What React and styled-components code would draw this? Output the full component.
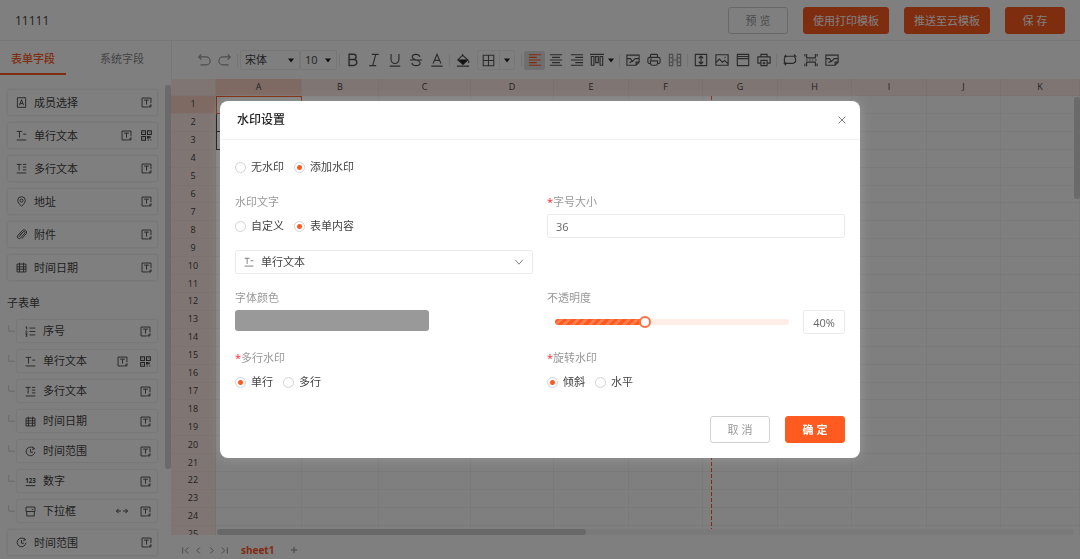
import React, { useState } from "react";
import styled, { createGlobalStyle, css } from "styled-components";

const icons = {
  undo: "M5 1.500 2 4.500l3 3M2 4.500h8.500a4.500 4.500 0 0 1 0 9H4",
  redo: "M11 1.500 14 4.500l-3 3M14 4.500H5.500a4.500 4.500 0 0 0 0 9H12",
  bold: "M3.500 1.500h5a3 3 0 0 1 0 6h-5zM3.500 7.500h5.500a3.300 3.300 0 0 1 0 6.700H3.500z",
  italic: "M5.500 1.500h8M2.500 14.500h8M10 1.500 6.500 14.500",
  underline: "M3.500 1v6.500a4.500 4.500 0 0 0 9 0V1M2 15h12",
  strike:
    "M12.500 4.500C12 2.500 10.500 1.500 8 1.500c-2.700 0-4.300 1.300-4.300 3C3.700 6.500 5.500 7.200 8 8c3 .8 4.600 1.600 4.600 3.500 0 1.700-1.700 3-4.600 3-2.700 0-4.400-1.200-4.700-3.200M1 8h14",
  color: "M3.500 12 8 1.500 12.500 12M5.200 8.500h5.600M1.500 15h13",
  borders: "M1.500 1.500h13v13h-13zM8 1.500v13M1.500 8h13",
  left: "M1 2h14M1 5h9M1 8h14M1 11h9M1 14h14",
  center: "M1 2h14M3.500 5h9M1 8h14M3.500 11h9M1 14h14",
  right: "M1 2h14M6 5h9M1 8h14M6 11h9M1 14h14",
  valign: "M0 1.500h16M1.500 4h3v10h-3zM6.500 4h3v7h-3zM11.500 4h3v10h-3z",
  picture: "M1 2.500h14v8l-3.500 3.500H1zM1 6.500h4l2.500 3 3-3H15M4 11l3-1.500M11.500 14v-3.500H15",
  printer:
    "M4 5V2.500a1 1 0 0 1 1-1h6a1 1 0 0 1 1 1V5M4 12H3.200A2 2 0 0 1 1 10V7a2 2 0 0 1 2-2h10a2 2 0 0 1 2 2v3a2 2 0 0 1-2.200 2H12M4 9h8v3a2 2 0 0 1-2 2H6a2 2 0 0 1-2-2zM3.500 7h2",
  merge: "M1.500 1.500h4v13h-4zM10.500 1.500h4v13h-4zM1.500 5.500h4M10.500 5.500h4M1.500 10.500h4M10.500 10.500h4M5.500 8h5",
  height: "M1.500 1.500h13v13h-13zM8 3.500v9M5.500 6 8 3.500 10.500 6M5.500 10 8 12.500 10.500 10",
  image: "M1 2h14v12H1zM1 11l4-4 3.500 3.500L11 8.500l4 4M11 5h1",
  header: "M1.500 1.500h13v13h-13zM1.500 4h13M1.500 6.500h13",
  printSet: "M4.500 4.500v-3h7v3M4 11.500H1v-7h14v7h-3M4.500 8.500h7v6h-7zM8 10v3M6.500 11.500h3",
  loop: "M3.500 2 1.500 4.500M12.500 1.500l2 2.200H5a3.800 3.800 0 0 0-3.500 4A3.800 3.800 0 0 0 3 11.500M3.500 14l-2-2.200H11a3.800 3.800 0 0 0 3.500-4A3.800 3.800 0 0 0 13 4.500",
  page: "M3 1v4.500h10V1M3 15v-4.500h10V15M1 1v3M15 1v3M1 15v-3M15 15v-3M2 8h2M6 8h1.500M9 8h1.500M12.500 8h2",
  member: "M2 1h12v14H2zM5 12l3-8 3 8M6 9.500h4",
  single: "M1 2h8M5 2v9M10.500 6H15M1 14.500h14",
  multi: "M1 2h7M4.500 2v9M10 2h5M10 6h5M10 10h5M1 14.500h14",
  place: "M8 15C4.500 11.500 2.500 9 2.500 6.500a5.500 5.500 0 0 1 11 0C13.500 9 11.500 11.500 8 15zM8 4.500a2.200 2.200 0 1 1 0 4.400 2.200 2.200 0 0 1 0-4.400z",
  clip: "M4 11.500 10.500 4a1.500 1.500 0 0 1 2.300 2L6.500 13.200a2.700 2.700 0 0 1-4-3.600L9 2.200a3.700 3.700 0 0 1 5.600 4.800L8.500 14M5.800 9 10 4.200",
  date: "M1.500 3h13v11.500h-13zM1.500 7h13M1.500 10.500h13M5 1v13.500M11 1v13.500",
  serial: "M6.500 3H15M6.500 8H15M6.500 13H15M1 2l1.500-1v4M1 7.500c2-1 3 0 0 3h2.500M1 12.500h2L2 14c2 0 1.500 1.500-1 1.500",
  clock: "M12 3a6.300 6.300 0 1 0 2.300 5.500M8 4.500V9h3.500M10.500 5.500l4-2M11.500 1l1 3",
  select: "M1.500 1.500h13V8h-13zM2.500 8v6.500h11V8M9.500 4l1.500 1.500L12.500 4",
  arrows: "M1 8h5.500M3.500 5 .500 8l3 3M9.500 8H15M12.500 5l3 3-3 3",
  field: "M14.500 9V1.500h-13v13H10M4.500 4.500h7M8 4.500V11M11 14.500l3.500-3.500v3.500z",
  qr: "M1 1h5.500v5.500H1zM9.500 1H15v5.500H9.500zM1 9.500h5.500V15H1zM3.500 3.500h.6M12 3.500h.6M3.500 12h.6M9.500 9.500h2v2h-2zM13.500 9v3M9.500 14.500h2M13.500 14.500H15",
  branch: "M3 0v11h11",
  first: "M3 2.500v11M13 2.500 7.500 8l5.500 5.500",
  prev: "M10.500 2.500 5 8l5.500 5.500",
  next: "M5.500 2.500 11 8l-5.500 5.500",
  last: "M13 2.500v11M3 2.500 8.500 8 3 13.500",
  plus: "M8 3v10M3 8h10",
  down: "M2 4.500 8 11.500l6-7",
  close: "M2.500 2.500l11 11M13.500 2.500l-11 11",
};

const Icon = ({ name, size = 11, weight = 1.3 }) => (
  <svg
    width={size}
    height={size}
    viewBox="0 0 16 16"
    fill="none"
    stroke="currentColor"
    strokeWidth={weight}
    aria-hidden="true"
  >
    <path d={icons[name]} />
  </svg>
);

const Caret = () => (
  <svg width="6" height="5" viewBox="0 0 6 5" aria-hidden="true">
    <path d="M0 0.500h6L3 4.500z" fill="#222" />
  </svg>
);

const NumberIcon = () => (
  <svg width="11" height="11" viewBox="0 0 16 16" aria-hidden="true">
    <text x="8" y="9.500" fontSize="9" fontWeight="700" textAnchor="middle" fill="currentColor">
      123
    </text>
    <path d="M1 14h14" stroke="currentColor" strokeWidth="1.400" />
  </svg>
);

const BucketIcon = () => (
  <svg width="14" height="14" viewBox="0 0 16 16" aria-hidden="true">
    <path d="M7.500 1v3M7.500 2.500 13.500 8 8 13 2 8z" fill="none" stroke="currentColor" strokeWidth="1.300" />
    <path d="M2.500 7.500h11L8 13z" fill="#222" />
    <path d="M14.500 8.500v3M1 15h14" stroke="currentColor" strokeWidth="1.300" />
  </svg>
);

const fields = [
  { icon: "member", name: "成员选择" },
  { icon: "single", name: "单行文本", qr: true },
  { icon: "multi", name: "多行文本" },
  { icon: "place", name: "地址" },
  { icon: "clip", name: "附件" },
  { icon: "date", name: "时间日期" },
];

const subFields = [
  { icon: "serial", name: "序号" },
  { icon: "single", name: "单行文本", qr: true },
  { icon: "multi", name: "多行文本" },
  { icon: "date", name: "时间日期" },
  { icon: "clock", name: "时间范围" },
  { icon: "number", name: "数字" },
  { icon: "select", name: "下拉框", arrows: true },
];

const columns = [
  ["A", 86],
  ["B", 77],
  ["C", 92],
  ["D", 83],
  ["E", 75],
  ["F", 74],
  ["G", 75],
  ["H", 74],
  ["I", 75],
  ["J", 74],
  ["K"],
];
const rows = Array.from({ length: 25 }, (_, i) => i + 1);

const Field = ({ icon, name, qr, arrows, sub }) => (
  <FieldCard $sub={sub}>
    <FieldName $sub={sub}>
      {icon === "number" ? <NumberIcon /> : <Icon name={icon} />}
      {name}
    </FieldName>
    {arrows && <Icon name="arrows" size={12} />}
    <Icon name="field" />
    {qr && <Icon name="qr" weight={1.6} />}
  </FieldCard>
);

const Choice = ({ group, options, picked }) => (
  <Choices role="radiogroup">
    {options.map((text, i) => (
      <ChoiceLabel key={text}>
        <Radio type="radio" name={group} defaultChecked={i === picked} />
        {text}
      </ChoiceLabel>
    ))}
  </Choices>
);

const Tool = ({ name, label, active, faded, weight }) => (
  <ToolButton type="button" aria-label={label || name} $active={active} $faded={faded}>
    <Icon name={name} size={14} weight={weight} />
  </ToolButton>
);

const Toolbar = () => (
  <Tools>
    <Tool name="undo" faded />
    <Tool name="redo" faded />
    <Divider />
    <Picker $width={60}>
      <select aria-label="字体" defaultValue="宋体">
        <option>宋体</option>
      </select>
      <Caret />
    </Picker>
    <Picker $width={37}>
      <select aria-label="字号" defaultValue="10">
        <option>10</option>
      </select>
      <Caret />
    </Picker>
    <Divider />
    <Tool name="bold" weight={1.6} />
    <Tool name="italic" />
    <Tool name="underline" />
    <Tool name="strike" />
    <Tool name="color" />
    <Divider />
    <ToolButton type="button" aria-label="fill">
      <BucketIcon />
    </ToolButton>
    <Split>
      <button type="button" aria-label="borders">
        <Icon name="borders" size={13} />
      </button>
      <button type="button" aria-label="border styles">
        <Caret />
      </button>
    </Split>
    <Divider />
    <Tool name="left" active />
    <Tool name="center" />
    <Tool name="right" />
    <ToolButton type="button" aria-label="vertical align" $wide>
      <Icon name="valign" size={14} />
      <Caret />
    </ToolButton>
    <Divider />
    <Tool name="picture" />
    <Tool name="printer" />
    <Tool name="merge" faded />
    <Divider />
    <Tool name="height" />
    <Tool name="image" />
    <Tool name="header" />
    <Tool name="printSet" />
    <Divider />
    <Tool name="loop" />
    <Tool name="page" />
    <Tool name="picture" label="watermark" />
  </Tools>
);

const Sheet = () => (
  <SheetArea>
    <Grid>
      <colgroup>
        <col width="45" />
        {columns.map(([letter, width]) => (
          <col key={letter} width={width} />
        ))}
      </colgroup>
      <thead>
        <tr>
          <Head />
          {columns.map(([letter], i) => (
            <Head key={letter} scope="col" $active={i === 0}>
              {letter}
            </Head>
          ))}
        </tr>
      </thead>
      <tbody>
        {rows.map((row) => (
          <tr key={row}>
            <Head scope="row" $active={row === 1}>
              {row}
            </Head>
            {columns.map(([letter], i) => (
              <Cell
                key={letter}
                $picked={i === 0 && row === 1}
                $boxed={i === 0 && (row === 2 || row === 3)}
              />
            ))}
          </tr>
        ))}
      </tbody>
    </Grid>
    <PageBreak />
    <VerticalThumb />
    <HorizontalBar />
  </SheetArea>
);

const WatermarkDialog = () => {
  const [opacity, setOpacity] = useState(38);
  const percent = Math.round(opacity / 10) * 10;

  return (
    <Mask>
      <Dialog role="dialog" aria-modal="true" aria-labelledby="dialog-title">
        <DialogHeader>
          <h2 id="dialog-title">水印设置</h2>
          <button type="button" aria-label="关闭">
            <Icon name="close" size={10} weight={1.5} />
          </button>
        </DialogHeader>
        <DialogBody>
          <Choice group="enabled" options={["无水印", "添加水印"]} picked={1} />
          <Columns>
            <Item>
              <Label as="span">水印文字</Label>
              <Choice group="source" options={["自定义", "表单内容"]} picked={1} />
              <SelectBox>
                <Icon name="single" size={10} />
                <select aria-label="表单字段" defaultValue="单行文本">
                  <option>单行文本</option>
                </select>
                <Icon name="down" size={10} />
              </SelectBox>
            </Item>
            <Item>
              <Label htmlFor="font-size" $required>
                字号大小
              </Label>
              <TextInput id="font-size" defaultValue="36" />
            </Item>
            <Item>
              <Label htmlFor="font-color">字体颜色</Label>
              <ColorButton id="font-color" type="button" />
            </Item>
            <Item>
              <Label htmlFor="opacity">不透明度</Label>
              <SliderRow>
                <Slider
                  id="opacity"
                  type="range"
                  value={opacity}
                  onChange={(e) => setOpacity(Number(e.target.value))}
                  style={{ "--fill": `${opacity}%` }}
                />
                <PercentInput aria-label="不透明度百分比" value={`${percent}%`} readOnly />
              </SliderRow>
            </Item>
            <Item>
              <Label as="span" $required>
                多行水印
              </Label>
              <Choice group="lines" options={["单行", "多行"]} picked={0} />
            </Item>
            <Item>
              <Label as="span" $required>
                旋转水印
              </Label>
              <Choice group="rotate" options={["倾斜", "水平"]} picked={0} />
            </Item>
          </Columns>
          <Footer>
            <Button type="button">取 消</Button>
            <Button type="button" $primary $strong>
              确 定
            </Button>
          </Footer>
        </DialogBody>
      </Dialog>
    </Mask>
  );
};

const App = () => {
  return (
    <Page>
      <GlobalStyle />
      <TopBar>
        <h1>11111</h1>
        <Button type="button">预 览</Button>
        <Button type="button" $primary>
          使用打印模板
        </Button>
        <Button type="button" $primary>
          推送至云模板
        </Button>
        <Button type="button" $primary>
          保 存
        </Button>
      </TopBar>
      <Workspace>
        <Sidebar>
          <Tabs>
            <Tab type="button" $active>
              表单字段
            </Tab>
            <Tab type="button">系统字段</Tab>
          </Tabs>
          <FieldScroll>
            <FieldList>
              {fields.map((field) => (
                <Field key={field.name} {...field} />
              ))}
              <GroupTitle>子表单</GroupTitle>
              {subFields.map((field) => (
                <SubRow key={field.name}>
                  <Icon name="branch" size={9} weight={1.5} />
                  <Field {...field} sub />
                </SubRow>
              ))}
              <Field icon="clock" name="时间范围" />
            </FieldList>
            <Thumb />
          </FieldScroll>
        </Sidebar>
        <Main>
          <Toolbar />
          <Sheet />
          <SheetBar>
            {["first", "prev", "next", "last"].map((name) => (
              <button key={name} type="button" aria-label={name}>
                <Icon name={name} size={9} weight={1.6} />
              </button>
            ))}
            <SheetTab type="button">sheet1</SheetTab>
            <button type="button" aria-label="add sheet">
              <Icon name="plus" size={10} weight={1.6} />
            </button>
          </SheetBar>
        </Main>
      </Workspace>
      <WatermarkDialog />
    </Page>
  );
};

const GlobalStyle = createGlobalStyle`
  * {
    box-sizing: border-box;
  }
  body {
    margin: 0;
    background: #fff;
  }
  body, button, input, select {
    font-family: "Open Sans", "Noto Sans CJK SC", sans-serif;
    font-size: 11px;
    line-height: 16px;
    color: #444;
  }
  button {
    padding: 0;
    border: none;
    background: none;
    cursor: pointer;
  }
  h1, h2 {
    margin: 0;
  }
  svg {
    display: block;
    flex: none;
  }
`;

const Page = styled.div`
  display: flex;
  flex-direction: column;
  height: 100vh;
  overflow: hidden;
`;

const TopBar = styled.header`
  display: flex;
  align-items: center;
  gap: 15px;
  padding: 7px 15px 6px;
  border-bottom: 1px solid #eee;
  h1 {
    flex: 1;
    font-size: 12px;
    font-weight: 400;
  }
`;

const Button = styled.button`
  min-width: 60px;
  height: 27px;
  padding: 0 9px;
  border: 1px solid #d0d0d0;
  border-radius: 3px;
  background: #fff;
  color: #999;
  white-space: nowrap;
  ${({ $primary }) =>
    $primary &&
    css`
      border-color: #ff5a1f;
      background: #ff5a1f;
      color: #fff;
    `}
  ${({ $strong }) => $strong && "font-weight: 700;"}
`;

const Workspace = styled.div`
  display: flex;
  flex: 1;
  min-height: 0;
`;

const Sidebar = styled.aside`
  display: flex;
  flex-direction: column;
  flex: none;
  width: 171px;
`;

const Tabs = styled.div`
  display: flex;
  justify-content: space-between;
  padding-right: 16px;
`;

const Tab = styled.button`
  width: 66px;
  height: 34px;
  padding-top: 4px;
  border-bottom: 2px solid ${({ $active }) => ($active ? "#ff5a1f" : "transparent")};
  color: ${({ $active }) => ($active ? "#ff5a1f" : "#888")};
  font-weight: ${({ $active }) => ($active ? 500 : 400)};
`;

const FieldScroll = styled.div`
  display: flex;
  justify-content: space-between;
  flex: 1;
  min-height: 0;
  padding-top: 10px;
  overflow: hidden;
`;

const FieldList = styled.div`
  display: flex;
  flex-direction: column;
  gap: 6px;
  width: 158px;
  padding: 4px 0 0 7px;
`;

const Thumb = styled.div`
  width: 6px;
  height: 384px;
  border-radius: 3px;
  background: #d4d4d4;
`;

const FieldCard = styled.div`
  display: flex;
  align-items: center;
  flex: ${({ $sub }) => ($sub ? "1" : "none")};
  gap: ${({ $sub }) => ($sub ? 12 : 9)}px;
  height: ${({ $sub }) => ($sub ? 24 : 27)}px;
  padding: 0 ${({ $sub }) => ($sub ? 6 : 5)}px 0 8px;
  border: 1px solid #f0f0f0;
  border-radius: 3px;
  box-shadow: 0 0 2px rgba(0, 0, 0, ${({ $sub }) => ($sub ? 0.05 : 0.12)});
`;

const FieldName = styled.span`
  display: flex;
  align-items: center;
  flex: 1;
  gap: 7px;
`;

const GroupTitle = styled.div`
  padding-top: 8px;
  margin-bottom: 2px;
`;

const SubRow = styled.div`
  display: flex;
  flex: none;
  > svg {
    margin-top: 6px;
    color: #ccc;
  }
`;

const Main = styled.main`
  display: flex;
  flex-direction: column;
  flex: 1;
  min-width: 0;
`;

const Tools = styled.div`
  display: flex;
  align-items: center;
  height: 38px;
  padding-left: 21px;
  border-left: 1px solid #eee;
`;

const Divider = styled.span`
  width: 1px;
  height: 13px;
  margin: 0 2px;
  background: #e8e8e8;
`;

const ToolButton = styled.button`
  display: flex;
  align-items: center;
  justify-content: center;
  flex: none;
  gap: 4px;
  width: ${({ $wide }) => ($wide ? 30 : 21)}px;
  height: 19px;
  border-radius: 2px;
  background: ${({ $active }) => ($active ? "#dfdfdf" : "none")};
  color: ${({ $active, $faded }) => ($active ? "#ff5a1f" : $faded ? "#999" : "#555")};
`;

const Picker = styled.label`
  display: flex;
  align-items: center;
  width: ${({ $width }) => $width}px;
  height: 20px;
  padding: 0 5px 0 4px;
  border: 1px solid #eee;
  border-radius: 2px;
  select {
    flex: 1;
    min-width: 0;
    padding: 0;
    border: none;
    background: none;
    appearance: none;
  }
`;

const Split = styled.div`
  display: flex;
  width: 38px;
  height: 20px;
  margin: 0 4px;
  border: 1px solid #eee;
  border-radius: 2px;
  button {
    display: flex;
    align-items: center;
    justify-content: center;
    flex: 3;
    color: #555;
  }
  button + button {
    flex: 2;
    border-left: 1px solid #eee;
  }
`;

const SheetArea = styled.div`
  position: relative;
  flex: 1;
  min-height: 0;
  overflow: hidden;
`;

const Grid = styled.table`
  width: 100%;
  height: 465px;
  table-layout: fixed;
  border-spacing: 0;
  thead tr {
    height: 17px;
  }
`;

const Head = styled.th`
  padding: 0;
  border-right: 1px solid #f5e2dc;
  border-bottom: 1px solid #f8e5df;
  background: ${({ $active }) => ($active ? "#ffd5c6" : "#ffebe4")};
  font-size: 9px;
  font-weight: 400;
  line-height: 14px;
  text-align: center;
`;

const Cell = styled.td`
  padding: 0;
  border-right: 1px solid #f4f4f4;
  border-bottom: 1px solid #f4f4f4;
  ${({ $picked }) => $picked && "border: 1px solid #ff5a1f;"}
  ${({ $boxed }) => $boxed && "border: 1px solid #333; border-top: none;"}
`;

const PageBreak = styled.div`
  position: absolute;
  top: 17px;
  bottom: 6px;
  left: 540px;
  width: 1px;
  background: repeating-linear-gradient(#ff5a1f 0 4px, transparent 4px 6px);
`;

const VerticalThumb = styled.div`
  position: absolute;
  top: 18px;
  right: 0;
  width: 6px;
  height: 102px;
  border-radius: 3px;
  background: #d4d4d4;
`;

const HorizontalBar = styled.div`
  position: absolute;
  right: 6px;
  bottom: 0;
  left: 46px;
  height: 6px;
  background: #f4f4f4;
  &::before {
    content: "";
    display: block;
    width: 43%;
    height: 6px;
    border-radius: 3px;
    background: #d0d0d0;
  }
`;

const SheetBar = styled.footer`
  display: flex;
  align-items: center;
  height: 24px;
  padding: 6px 0 0 8px;
  button {
    display: flex;
    align-items: center;
    justify-content: center;
    width: 13px;
    color: #888;
  }
`;

const SheetTab = styled.button`
  && {
    width: auto;
    margin: 0 13px 0 10px;
    color: #ff5a1f;
    font-size: 10px;
    font-weight: 700;
  }
`;

const Mask = styled.div`
  position: fixed;
  inset: 0;
  display: flex;
  align-items: flex-start;
  justify-content: center;
  padding-top: 101px;
  background: rgba(0, 0, 0, 0.5);
`;

const Dialog = styled.section`
  width: 640px;
  border-radius: 8px;
  background: #fff;
  box-shadow: 0 0 12px rgba(255, 255, 255, 0.2);
`;

const DialogHeader = styled.header`
  display: flex;
  align-items: center;
  justify-content: space-between;
  height: 39px;
  padding: 0 13px 0 17px;
  border-bottom: 1px solid #f0f0f0;
  h2 {
    font-size: 12px;
    font-weight: 500;
    color: #222;
  }
  button {
    color: #777;
  }
`;

const DialogBody = styled.div`
  padding: 15px;
`;

const Columns = styled.div`
  display: grid;
  grid-template-columns: 1fr 1fr;
  gap: 16px 14px;
  padding: 15px 0 22px;
`;

const Item = styled.div`
  display: flex;
  flex-direction: column;
  gap: 4px;
`;

const Label = styled.label`
  color: #999;
  ${({ $required }) =>
    $required &&
    css`
      &::before {
        content: "*";
        color: #f5222d;
      }
    `}
`;

const Choices = styled.div`
  display: flex;
  align-items: center;
  gap: 10px;
  height: 24px;
`;

const ChoiceLabel = styled.label`
  display: flex;
  align-items: center;
  gap: 5px;
`;

const Radio = styled.input`
  width: 11px;
  height: 11px;
  margin: 0;
  border: 1px solid #d4d4d4;
  border-radius: 50%;
  appearance: none;
  &:checked {
    background: radial-gradient(circle, #ff5a1f 2px, #fff 3px);
  }
`;

const box = css`
  height: 24px;
  border: 1px solid #ebebeb;
  border-radius: 2px;
  background: #fff;
  color: #666;
`;

const SelectBox = styled.div`
  ${box}
  display: flex;
  align-items: center;
  gap: 7px;
  margin-top: 8px;
  padding: 0 8px;
  select {
    flex: 1;
    padding: 0;
    border: none;
    background: none;
    appearance: none;
  }
`;

const TextInput = styled.input`
  ${box}
  padding: 0 8px;
`;

const PercentInput = styled.input`
  ${box}
  width: 42px;
  padding: 0;
  text-align: center;
`;

const ColorButton = styled.button`
  width: 65%;
  height: 21px;
  border-radius: 3px;
  background: #999;
`;

const SliderRow = styled.div`
  display: flex;
  align-items: center;
  gap: 14px;
  padding-left: 8px;
`;

const Slider = styled.input`
  flex: 1;
  min-width: 0;
  height: 12px;
  margin: 0;
  background: none;
  appearance: none;
  &::-webkit-slider-runnable-track {
    height: 6px;
    border-radius: 3px;
    background:
      linear-gradient(90deg, transparent var(--fill), #ffeee7 var(--fill)),
      repeating-linear-gradient(135deg, #ff5a1f 0 3px, #ff7d4d 3px 6px);
  }
  &::-webkit-slider-thumb {
    width: 12px;
    height: 12px;
    margin-top: -3px;
    border: 2px solid #ff7040;
    border-radius: 50%;
    background: #fff;
    appearance: none;
  }
`;

const Footer = styled.footer`
  display: flex;
  justify-content: flex-end;
  gap: 15px;
`;

export default App;
